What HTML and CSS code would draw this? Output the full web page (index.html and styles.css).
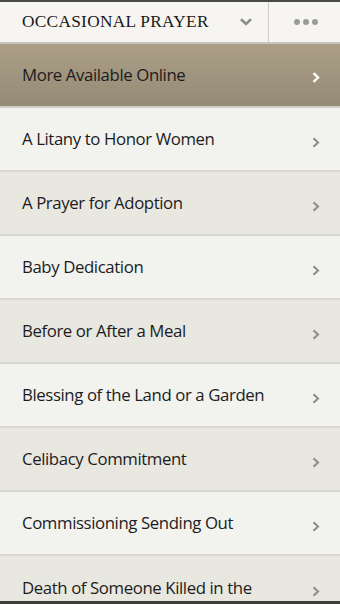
FILE: index.html
```html
<!DOCTYPE html>
<html>
<head>
<meta charset="utf-8">
<link rel="stylesheet" href="styles.css">
</head>
<body>
<div class="screen">
  <header class="topbar">
    <div class="title-wrap">
      <span class="title">Occasional Prayer</span>
      <svg class="caret" width="12" height="8" viewBox="0 0 12 8"><path d="M1 1.2 L6 6 L11 1.2" fill="none" stroke="#8e8e8e" stroke-width="2.6"/></svg>
    </div>
    <div class="more">
      <span class="dot"></span><span class="dot"></span><span class="dot"></span>
    </div>
  </header>
  <ul class="list">
    <li class="row featured"><span class="label">More Available Online</span><svg class="chev" width="8" height="11" viewBox="0 0 8 11"><path d="M1.5 1.2 L6 5.5 L1.5 9.8" fill="none" stroke="#ffffff" stroke-width="2.4"/></svg></li>
    <li class="row light"><span class="label">A Litany to Honor Women</span><svg class="chev" width="8" height="11" viewBox="0 0 8 11"><path d="M1.5 1.2 L6 5.5 L1.5 9.8" fill="none" stroke="#8f8f8f" stroke-width="2.2"/></svg></li>
    <li class="row dark"><span class="label">A Prayer for Adoption</span><svg class="chev" width="8" height="11" viewBox="0 0 8 11"><path d="M1.5 1.2 L6 5.5 L1.5 9.8" fill="none" stroke="#8f8f8f" stroke-width="2.2"/></svg></li>
    <li class="row light"><span class="label">Baby Dedication</span><svg class="chev" width="8" height="11" viewBox="0 0 8 11"><path d="M1.5 1.2 L6 5.5 L1.5 9.8" fill="none" stroke="#8f8f8f" stroke-width="2.2"/></svg></li>
    <li class="row dark"><span class="label">Before or After a Meal</span><svg class="chev" width="8" height="11" viewBox="0 0 8 11"><path d="M1.5 1.2 L6 5.5 L1.5 9.8" fill="none" stroke="#8f8f8f" stroke-width="2.2"/></svg></li>
    <li class="row light"><span class="label">Blessing of the Land or a Garden</span><svg class="chev" width="8" height="11" viewBox="0 0 8 11"><path d="M1.5 1.2 L6 5.5 L1.5 9.8" fill="none" stroke="#8f8f8f" stroke-width="2.2"/></svg></li>
    <li class="row dark"><span class="label">Celibacy Commitment</span><svg class="chev" width="8" height="11" viewBox="0 0 8 11"><path d="M1.5 1.2 L6 5.5 L1.5 9.8" fill="none" stroke="#8f8f8f" stroke-width="2.2"/></svg></li>
    <li class="row light"><span class="label">Commissioning Sending Out</span><svg class="chev" width="8" height="11" viewBox="0 0 8 11"><path d="M1.5 1.2 L6 5.5 L1.5 9.8" fill="none" stroke="#8f8f8f" stroke-width="2.2"/></svg></li>
    <li class="row dark last"><span class="label">Death of Someone Killed in the</span><svg class="chev" width="8" height="11" viewBox="0 0 8 11"><path d="M1.5 1.2 L6 5.5 L1.5 9.8" fill="none" stroke="#8f8f8f" stroke-width="2.2"/></svg></li>
  </ul>
</div>
</body>
</html>
```
FILE: styles.css
```css
* { box-sizing: border-box; }
html, body { margin: 0; padding: 0; }
body { width: 340px; height: 604px; overflow: hidden; background: #e8e7e0; }
.screen {
  width: 340px; height: 604px; overflow: hidden;
  border-top: 2px solid #4a4a48;
  border-bottom: 3px solid #3e3e3c;
  display: flex; flex-direction: column;
}
.topbar {
  height: 42px; flex: none;
  display: flex;
  background: #f6f5f1;
  border-bottom: 2px solid #c9c5bb;
}
.title-wrap {
  width: 269px; display: flex; align-items: center;
  padding-left: 22px;
  border-right: 1px solid #cfccc4;
}
.title {
  font-family: "Liberation Serif", serif;
  text-transform: uppercase; font-size: 17.3px; letter-spacing: 0.3px;
  color: #1a1a1a;
}
.caret { margin-left: 31px; }
.more {
  flex: 1; display: flex; align-items: center; justify-content: center; gap: 3px;
  padding-left: 2px;
}
.dot { width: 6px; height: 6px; border-radius: 50%; background: #9a9a9a; }
.list { list-style: none; margin: 0; padding: 0; flex: 1; }
.row {
  height: 64px; display: flex; align-items: center; justify-content: space-between;
  padding: 0 20px 0 22px;
  border-bottom: 2px solid #d9d7d0;
  font-family: "Open Sans", "Liberation Sans", sans-serif;
  font-size: 16.8px; color: #1c1c1c;
}
.row .label { margin-top: -2px; letter-spacing: -0.4px; }
.row .chev { margin-top: 7px; }
.featured {
  height: 64px;
  background: linear-gradient(#ab9f88, #958a74);
  border-bottom: 2px solid #d2cfc6;
}
.featured .chev { margin-top: 5px; }
.light { background: #f2f2ef; }
.dark { background: #e8e7e0; }
.last { border-bottom: none; }
```
